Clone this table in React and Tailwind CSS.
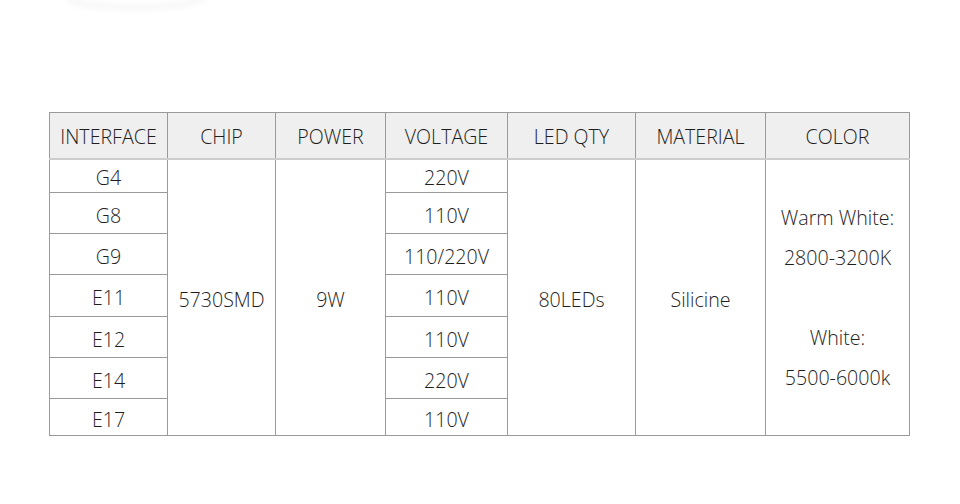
import React from "react";

const cols = [118, 108, 110, 122, 128, 130, 144];
const headers = ["INTERFACE", "CHIP", "POWER", "VOLTAGE", "LED QTY", "MATERIAL", "COLOR"];
const rows = [
  ["G4", "220V", "h-[34px]"],
  ["G8", "110V", "h-[41px]"],
  ["G9", "110/220V", "h-[41px]"],
  ["E11", "110V", "h-[42px]"],
  ["E12", "110V", "h-[41px]"],
  ["E14", "220V", "h-[41px]"],
  ["E17", "110V", "h-[37px]"],
];

const cell = "border border-[#9a9a9a] text-center align-middle p-0 pt-[5px]";

export default function App() {
  return (
    <div
      className="relative w-[960px] h-[504px] bg-white overflow-hidden text-[#1e1e1e]"
      style={{ fontFamily: '"Open Sans", "Noto Sans", sans-serif' }}
    >
      <svg className="absolute left-[40px] top-[-20px]" width="180" height="40" viewBox="0 0 180 40">
        <defs>
          <filter id="b" x="-50%" y="-50%" width="200%" height="200%">
            <feGaussianBlur stdDeviation="3" />
          </filter>
        </defs>
        <ellipse cx="95" cy="18" rx="70" ry="12" fill="#ececec" filter="url(#b)" opacity="0.5" />
        <ellipse cx="95" cy="14" rx="66" ry="11" fill="#ffffff" filter="url(#b)" />
      </svg>
      <div className="pt-[112px] pl-[49px]">
        <table className="table-fixed border-collapse text-[19.6px] font-light leading-[24px]" style={{ width: 861 }}>
          <colgroup>
            {cols.map((w, i) => (
              <col key={i} style={{ width: w }} />
            ))}
          </colgroup>
          <thead>
            <tr className="h-[46px]">
              {headers.map((h) => (
                <th
                  key={h}
                  className="border border-[#9a9a9a] border-b-2 border-b-[#cdcdcd] bg-[#efefef] font-light text-center align-middle p-0 pt-[4px]"
                >
                  {h}
                </th>
              ))}
            </tr>
          </thead>
          <tbody>
            {rows.map(([iface, volt, h], i) => (
              <tr key={iface} className={h}>
                <td className={cell}>{iface}</td>
                {i === 0 && (
                  <>
                    <td rowSpan={7} className={cell}>5730SMD</td>
                    <td rowSpan={7} className={cell}>9W</td>
                  </>
                )}
                <td className={cell}>{volt}</td>
                {i === 0 && (
                  <>
                    <td rowSpan={7} className={cell}>80LEDs</td>
                    <td rowSpan={7} className={cell}>Silicine</td>
                    <td rowSpan={7} className="border border-[#9a9a9a] text-center align-middle p-0 pt-[1px] leading-[40px]">
                      <div>Warm White:</div>
                      <div>2800-3200K</div>
                      <div>&nbsp;</div>
                      <div>White:</div>
                      <div>5500-6000k</div>
                    </td>
                  </>
                )}
              </tr>
            ))}
          </tbody>
        </table>
      </div>
    </div>
  );
}
